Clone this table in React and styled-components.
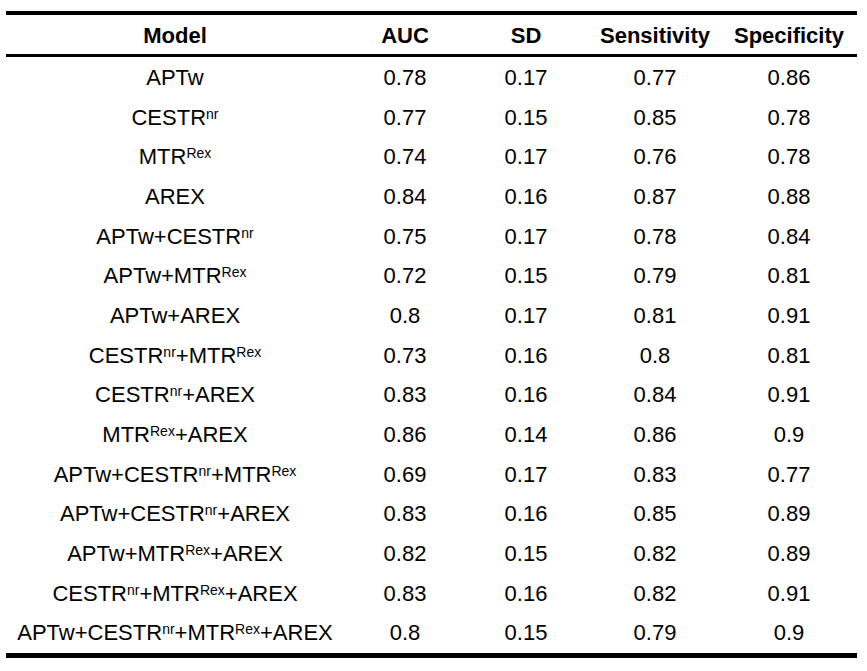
import React from "react";
import styled, { createGlobalStyle } from "styled-components";

const Global = createGlobalStyle`
  html, body { margin: 0; padding: 0; background: #ffffff; }
  body { font-family: "Liberation Sans", Arial, sans-serif; color: #000; }
`;

const Page = styled.div`
  padding: 11px 0 0 6px;
  width: 851px;
`;

const Table = styled.div`
  width: 851px;
  border-top: 4px solid #000;
  border-bottom: 5px solid #000;
`;

const Row = styled.div`
  display: grid;
  grid-template-columns: 338px 122px 120px 138px 1fr;
  height: ${(p) => (p.$head ? "42px" : "39.7px")};
  align-items: center;
  padding-top: ${(p) => (p.$head ? "3px" : "0")};
  box-sizing: border-box;
  border-bottom: ${(p) => (p.$head ? "3px solid #000" : "none")};
`;

const Body = styled.div`
  padding-top: 1px;
`;

const Cell = styled.div`
  text-align: center;
  font-size: 22px;
  line-height: 36px;
  font-weight: ${(p) => (p.$bold ? 700 : 400)};
  white-space: nowrap;
  padding-right: ${(p) => (p.$last ? "3px" : "0")};
`;

const Sup = styled.sup`
  font-size: 14px;
  line-height: 0;
  vertical-align: 6px;
`;

const rows = [
  [["APTw"], "0.78", "0.17", "0.77", "0.86"],
  [["CESTR", "nr"], "0.77", "0.15", "0.85", "0.78"],
  [["MTR", "Rex"], "0.74", "0.17", "0.76", "0.78"],
  [["AREX"], "0.84", "0.16", "0.87", "0.88"],
  [["APTw+CESTR", "nr"], "0.75", "0.17", "0.78", "0.84"],
  [["APTw+MTR", "Rex"], "0.72", "0.15", "0.79", "0.81"],
  [["APTw+AREX"], "0.8", "0.17", "0.81", "0.91"],
  [["CESTR", "nr", "+MTR", "Rex"], "0.73", "0.16", "0.8", "0.81"],
  [["CESTR", "nr", "+AREX"], "0.83", "0.16", "0.84", "0.91"],
  [["MTR", "Rex", "+AREX"], "0.86", "0.14", "0.86", "0.9"],
  [["APTw+CESTR", "nr", "+MTR", "Rex"], "0.69", "0.17", "0.83", "0.77"],
  [["APTw+CESTR", "nr", "+AREX"], "0.83", "0.16", "0.85", "0.89"],
  [["APTw+MTR", "Rex", "+AREX"], "0.82", "0.15", "0.82", "0.89"],
  [["CESTR", "nr", "+MTR", "Rex", "+AREX"], "0.83", "0.16", "0.82", "0.91"],
  [["APTw+CESTR", "nr", "+MTR", "Rex", "+AREX"], "0.8", "0.15", "0.79", "0.9"],
];

function ModelName({ parts }) {
  return (
    <>
      {parts.map((p, i) =>
        i % 2 === 1 ? <Sup key={i}>{p}</Sup> : <React.Fragment key={i}>{p}</React.Fragment>
      )}
    </>
  );
}

export default function App() {
  return (
    <Page>
      <Global />
      <Table>
        <Row $head>
          <Cell $bold>Model</Cell>
          <Cell $bold>AUC</Cell>
          <Cell $bold>SD</Cell>
          <Cell $bold>Sensitivity</Cell>
          <Cell $bold $last>Specificity</Cell>
        </Row>
        <Body>
          {rows.map((r, i) => (
            <Row key={i}>
              <Cell><ModelName parts={r[0]} /></Cell>
              <Cell>{r[1]}</Cell>
              <Cell>{r[2]}</Cell>
              <Cell>{r[3]}</Cell>
              <Cell $last>{r[4]}</Cell>
            </Row>
          ))}
        </Body>
      </Table>
    </Page>
  );
}
